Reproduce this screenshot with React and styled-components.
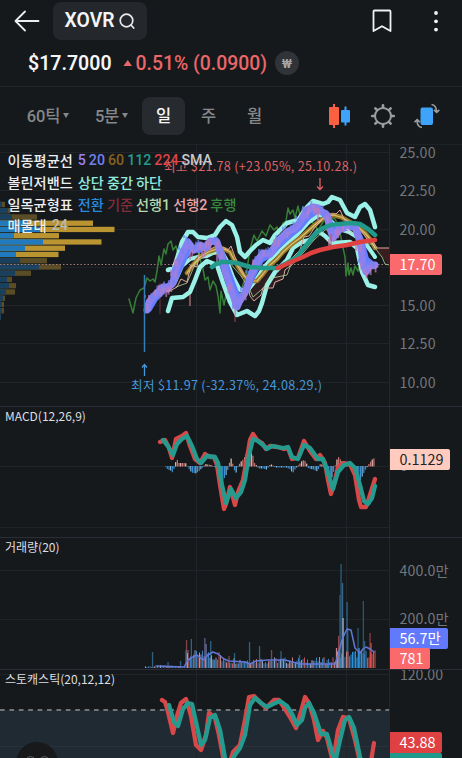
import React from 'react';
import styled, { createGlobalStyle } from 'styled-components';

const GlobalStyle = createGlobalStyle`
  * { box-sizing: border-box; }
  body {
    margin: 0;
    background: #15191c;
    overflow: hidden;
  }
`

const Screen = styled.div`
  width: 462px;
  height: 758px;
  overflow: hidden;
  display: flex;
  flex-direction: column;
  background: #15191c;
  color: #f4f5f6;
  font-family: Roboto, "Noto Sans CJK KR", sans-serif;
`

const Header = styled.header`
  height: 43px;
  flex: none;
  display: flex;
  align-items: center;
  padding: 0 20px 1px 14px;
`

const TickerButton = styled.button`
  width: 94px;
  height: 38px;
  margin: 0 auto 0 13px;
  padding: 0 0 2px;
  display: flex;
  align-items: center;
  justify-content: center;
  gap: 5px;
  border: 0;
  border-radius: 8px;
  background: #24282c;
  color: #f4f5f6;
  font: 600 19.3px Roboto, sans-serif;
`

const HeaderIcon = styled.svg`
  flex: none;
  margin-left: ${props => props.$left || 0}px;
`

const PriceRow = styled.div`
  height: 44px;
  flex: none;
  display: flex;
  align-items: center;
  padding: 0 0 3px 28px;
  border-bottom: 1px solid #22262a;
  font-size: 20px;
  font-weight: 600;
`

const Price = styled.span`
  width: 95px;
  font-size: 19.5px;
`

const Change = styled.span`
  width: 144px;
  display: flex;
  align-items: center;
  gap: 3px;
  color: #e96768;
  font-size: 19.4px;
  font-weight: 500;
  white-space: nowrap;
`

const Currency = styled.span`
  width: 24px;
  height: 24px;
  margin-left: 8px;
  display: flex;
  align-items: center;
  justify-content: center;
  border-radius: 50%;
  background: #303439;
  color: #a5a8aa;
  font: 600 13px Roboto, sans-serif;
`

const Toolbar = styled.nav`
  height: 58px;
  flex: none;
  display: flex;
  align-items: center;
  padding: 0 22px 0 15px;
  border-bottom: 1px solid #1f2327;
`

const Period = styled.button`
  width: ${props => props.$width}px;
  height: 38px;
  padding: 0 0 2px;
  border: 0;
  border-radius: 8px;
  display: flex;
  align-items: center;
  justify-content: center;
  gap: 3px;
  background: ${props => props.$active ? '#272b2f' : 'transparent'};
  color: ${props => props.$active ? '#f7f7f7' : '#85888a'};
  font: 500 16.5px Roboto, "Noto Sans CJK KR", sans-serif;
  letter-spacing: -0.2px;
`

const Caret = styled.span`
  width: 0;
  height: 0;
  border: 3.5px solid transparent;
  border-top: 5.5px solid #85888a;
  border-bottom: 0;
  margin-top: 2px;
`

const Tools = styled.div`
  margin-left: auto;
  display: flex;
  align-items: center;
  gap: 18px;
`

const Panel = styled.section`
  position: relative;
  height: ${props => props.$height}px;
  flex: none;
  display: flex;
  overflow: hidden;
  border-bottom: 1px solid #2a2e37;
`

const Plot = styled.svg`
  width: 390px;
  height: 100%;
  flex: none;
  display: block;
  border-right: 1px solid #24282d;
`

const Axis = styled.svg`
  width: 72px;
  height: 100%;
  display: block;
  fill: #73767a;
  font: 14.2px "Noto Sans CJK KR", sans-serif;
`

const Badge = styled.span`
  position: absolute;
  left: 390px;
  top: ${props => props.$top}px;
  width: ${props => props.$width}px;
  height: 20.5px;
  padding-left: 9.5px;
  border-radius: 0 2px 2px 0;
  background: ${props => props.$bg};
  color: ${props => props.$color || '#fff'};
  font: 14.4px/19.5px "Noto Sans CJK KR", sans-serif;
`

const Legend = styled.div`
  position: absolute;
  left: 7.5px;
  top: 4.5px;
  display: flex;
  flex-direction: column;
`

const LegendRow = styled.div`
  height: 21.7px;
  display: flex;
  align-items: center;
  gap: 3px;
  white-space: nowrap;
  font: 500 14.2px Roboto, "Noto Sans CJK KR", sans-serif;
`

const LegendItem = styled.span`
  color: ${props => props.$color || '#eeeeef'};
  margin-right: ${props => props.$gap || 0}px;
`

const PanelTitle = styled.span`
  position: absolute;
  left: 5px;
  top: 0;
  color: #dddee0;
  font: 12px/17px "Noto Sans CJK KR", sans-serif;
`

const Fab = styled.div`
  position: absolute;
  left: 16px;
  top: 72px;
  width: 42px;
  height: 42px;
  border-radius: 50%;
  background: #17191b;
  display: flex;
  justify-content: center;
  gap: 5px;
  padding-top: 14px;
`

const FabDot = styled.span`
  width: 9px;
  height: 9px;
  border-radius: 50%;
  border: 1px solid #65605c;
`

// [volume on up days, total, highlighted]
const profile = [
  [2, 5, 0], [8, 10, 0], [12, 37, 0], [27, 93, 1], [40, 114.5, 1], [14, 59, 1],
  [43, 101.5, 1], [25, 65, 1], [16, 58.5, 1], [20, 47, 0], [39, 61, 0], [15, 31, 0],
  [7, 12, 0], [9, 16, 0], [6, 15, 0], [3, 5, 0], [2, 4, 0], [2, 4, 0], [1, 1, 0],
]

const bandTop = '168,270 174,268 179,252 182,242 188,232 193,232 198,237 207,238 215,235 220,227 226,221 232,225 237,237 240,252 245,257 250,251 256,245 263,240 270,243 275,235 287,223 298,220 307,207 313,201 323,204 328,202 332,197 340,200 347,213 355,217 360,207 365,204 370,210 375,227'
const bandMid = '168,290 175,282 182,266 190,259 198,257 207,256 215,252 221,250 227,261 233,277 240,290 248,290 256,280 264,267 274,256 286,245 298,234 309,222 319,215 329,219 339,229 349,232 357,237 366,244 375,257'
const bandLow = '168,311 172,298 183,297 190,292 195,280 200,267 207,261 217,265 223,283 230,302 237,315 242,313 247,311 255,316 259,311 262,303 267,285 275,272 287,260 293,248 302,242 310,240 318,231 325,236 332,243 350,242 357,248 362,272 368,285 375,287'
const sma5 = [[147, 310], [149, 302], [153, 297], [159, 291], [163, 287], [168, 287], [173, 283], [175, 271], [179, 261], [183, 252], [188, 242], [194, 250], [200, 245], [206, 248], [210, 241], [217, 242], [221, 255], [225, 271], [230, 286], [237, 307], [241, 298], [245, 293], [250, 277], [257, 261], [263, 253], [270, 254], [278, 241], [287, 232], [295, 228], [300, 222], [307, 210], [313, 207], [318, 208], [322, 212], [327, 215], [330, 229], [333, 238], [340, 229], [347, 227], [355, 227], [360, 242], [363, 263], [366, 272], [370, 266], [375, 265]]
const sma20 = '149,309 155,299 164,290 172,285 178,272 184,259 190,248 199,250 209,243 216,240 223,257 229,274 236,293 241,300 247,289 254,273 261,260 270,255 279,245 289,236 299,228 308,217 318,210 326,213 333,230 343,229 354,224 361,240 366,259 374,266'
const sma60 = '187,273 193,265 200,257 208,252 217,249 224,249 230,252 237,265 244,276 251,281 257,281 263,274 270,265 277,259 283,252 292,244 300,238 309,230 317,223 325,217 333,215 341,217 350,222 358,227 365,233 370,239 375,248'
const sma112 = '212,267 216,264 222,262 229,262 237,263 250,267 262,268 277,268 287,263 297,257 302,250 308,243 315,234 323,228 331,225 340,224 351,223 360,224 368,229 375,235'
const sma224 = '278,268 291,262 303,257 311,253 320,250 333,247 347,245 360,242 375,240'
const lagging = '129,299 131,306 133,313 136,298 140,290 144,288 147,278 150,281 153,279 155,282 157,271 159,256 161,265 164,249 166,254 168,244 171,241 173,250 176,246 178,254 183,246 188,240 192,248 198,252 203,269 205,280 208,277 210,290 213,281 216,286 218,296 220,313 221,291 224,305 227,290 232,300 240,293 246,276 250,249 254,235 257,241 262,231 266,236 270,225 274,230 277,227 279,234 283,223 286,221 288,208 290,214 293,210 295,218 298,206 300,216 303,207 306,213 310,219 318,230 327,216 335,219 339,227 342,243 345,257 346,276 348,263 349,275 351,268 353,275 355,266 358,271 360,265'
const spanA = '168,292 177,287 181,279 187,282 191,265 197,267 200,248 211,249 216,246 223,247 228,250 231,246 235,257 240,267 247,280 250,296 254,301 261,295 263,288 273,288 275,282 283,279 285,270 290,266 293,257 300,250 304,237 309,236 315,227 324,218 329,214 336,214 340,210 344,219 351,225 360,229 367,239 373,242 377,248 389,248'
const spanB = '176,287 187,283 196,262 208,254 222,255 230,263 241,276 250,290 253,297 261,290 272,278 287,275 290,267 304,252 314,240 325,230 342,228 357,235 364,244 373,244 378,252 382,257 385,264 389,265'

const macd = '160,442 165,440 169,448 172,458 176,439 182,436 186,433 190,446 195,459 200,463 205,454 210,457 214,457 217,465 220,485 224,509 226,504 230,487 235,505 238,492 243,480 247,458 250,440 253,434 257,440 262,443 266,449 270,446 278,447 284,449 288,448 292,459 298,458 304,441 310,451 316,459 320,455 325,463 328,480 331,494 335,480 338,467 344,463 350,464 355,475 359,500 361,507 366,507 369,498 375,479'
const signal = '163,440 168,446 173,455 177,444 182,439 187,436 192,446 197,459 201,463 207,456 215,457 218,463 222,485 226,503 231,489 236,498 241,492 245,480 249,455 253,439 258,441 263,445 267,449 272,446 283,448 288,447 292,457 298,459 304,445 310,448 318,459 323,459 328,473 333,489 338,472 344,465 350,463 355,468 360,485 364,501 368,504 372,498 375,486'
const volumeMa = '157,666 184,667 188,660 193,657 197,655 203,660 208,655 213,652 218,654 224,659 229,661 245,662 250,664 256,661 268,660 285,660 300,664 320,664 335,664 338,655 342,640 345,633 347,629 351,630 353,639 355,648 360,653 363,649 366,647 370,649 374,652'
const stochK = '162,700 165,702 168,712 173,733 177,716 181,703 186,699 191,716 196,745 201,750 206,735 209,713 215,718 219,735 224,762 230,762 233,752 240,745 245,720 249,697 254,696 260,702 266,708 274,700 279,700 285,709 290,717 296,728 300,715 305,697 309,703 314,720 318,740 323,731 327,738 333,762 338,730 343,717 349,718 355,740 360,762'
const stochD = '169,705 174,722 178,726 183,709 188,703 192,704 196,722 201,745 205,740 210,718 215,715 220,730 225,758 229,765 235,755 240,748 245,735 250,705 255,698 261,703 267,707 273,704 280,701 287,706 292,714 297,725 302,720 305,708 309,703 314,713 321,734 327,734 331,748 335,763 340,740 345,720 349,717 354,728 360,757 364,766'

// repeatable noise so that the bars keep their heights between renders
const noise = i => {
  const n = Math.sin(i * 12.9898) * 43758.5453
  return n - Math.floor(n)
}

// negative values are drawn above the zero line
const histogram = [
  [165, 0], [167, 3], [170, 4], [172, 6], [174, 1], [176, -8], [178, -3], [182, -3], [185, -3], [188, 2], [191, 6], [195, 7], [198, 5], [201, 2], [205, -2], [210, -1], [215, 1],
  [217, 4], [220, 11], [222, 14], [225, 10], [228, 1], [230, -9], [232, -3], [235, 8], [237, 1], [240, -4], [243, -7], [246, -13], [249, -15], [252, -12], [254, -3], [258, 2], [262, 2], [266, 3],
  [270, -2], [275, 1], [286, 1], [290, 3], [292, 7], [295, 2], [299, -2], [302, -6], [305, -5], [308, 2], [313, 3], [317, 5], [320, -3], [324, 2], [327, 7], [331, 12], [334, 2],
  [336, -6], [338, -9], [341, -5], [345, -3], [350, 1], [354, 6], [357, 11], [360, 14], [362, 9], [365, 3], [369, -3], [372, -7], [374, -8],
]

const histBars = Array.from({ length: 125 }, (_, i) => {
  const x = 165 + i * 1.68
  const next = histogram.findIndex(p => p[0] >= x)
  if (next < 1) return [x, histogram[next < 0 ? histogram.length - 1 : 0][1]]
  const a = histogram[next - 1]
  const b = histogram[next]
  return [x, a[1] + (b[1] - a[1]) * (x - a[0]) / (b[0] - a[0])]
})

const volumeBars = Array.from({ length: 154 }, (_, i) => {
  const x = 145.5 + i * 1.5
  const n = noise(i + 3)
  let h = 4 + n * 7
  if (x < 185) h = n * 3
  else if (x < 222) h = 7 + n * 11
  else if (x > 336) h = 10 + n * 8
  const color = ['#3b7eb5', '#b95659', '#8b9fc0', '#bd8085', '#397dba'][Math.floor(noise(i + 71) * 5)]
  return [x, h, x > 350 && x < 363 ? '#2d91da' : x > 368 ? '#d84e4a' : color]
})

const spikes = [
  [152.5, 16, '#315f80'], [168, 6, '#315f80'], [180.5, 7, '#315f80'], [186.5, 28, '#834444'], [188, 18, '#965055'], [191.3, 29, '#2e6289'], [204.8, 30, '#575f88'], [206, 24, '#746b91'], [210.7, 27, '#2e6289'],
  [229, 12, '#844747'], [234.5, 15, '#315f80'], [249.5, 26, '#2e6289'], [259.5, 22, '#2e6289'], [271.5, 18, '#844747'], [281, 17, '#315f80'], [299.5, 13, '#315f80'], [312, 8, '#315f80'], [327, 8, '#315f80'],
  [336.5, 20, '#c5878c'], [338.7, 32, '#974e52'], [340, 73, '#315f85'], [341, 104, '#295f7d'], [342.5, 85, '#3c6384'], [343, 50, '#a9a7b7'], [347, 66, '#2b6691'], [347.7, 38, '#2b6691'], [358, 40, '#285a71'], [359, 20, '#2d91da'],
  [363.3, 67, '#28566f'], [364.5, 27, '#315f80'], [370, 35, '#83413f'], [371, 25, '#cc4845'],
]

function Line({ points, color, width = 4, opacity = 1 }) {
  return <polyline points={points} fill="none" stroke={color} strokeWidth={width} strokeOpacity={opacity} strokeLinecap="round" strokeLinejoin="round" />
}

function Grid({ rows, top, bottom }) {
  return (
    <g stroke="#202429">
      {rows.map(y => <line key={y} x1="0" x2="389" y1={y + 0.5} y2={y + 0.5} />)}
      {[196.5, 346.5].map(x => <line key={x} x1={x} x2={x} y1={top} y2={bottom} />)}
    </g>
  )
}

function PriceCandles() {
  return (
    <g>
      {sma5.slice(1).map(([x, y], i) => [0, 1, 2].map(k => {
        const n = noise(i * 3 + k)
        const px = x - 4 + k * 2.3
        const py = y - 7 + n * 9
        return <line key={`${i}-${k}`} x1={px} x2={px} y1={py} y2={py + 3 + n * 5} stroke={n > 0.5 ? '#c27cb9' : '#6f84f5'} strokeWidth="1.8" opacity=".75" />
      }))}
    </g>
  )
}

function PriceChart() {
  const priceRows = [152, 190, 229, 267, 305, 343, 382]
  const labels = ['25.00', '22.50', '20.00', null, '15.00', '12.50', '10.00']
  return (
    <Panel $height={262}>
      <Plot viewBox="0 145 389 261" preserveAspectRatio="none">
        <Grid rows={priceRows} top={145} bottom={406} />
        {profile.map(([up, total, strong], i) => (
          <g key={i} opacity={strong ? 1 : 0.42}>
            <rect x="0" y={201.8 + i * 6.25} width={total} height="5.3" fill="#b99431" />
            <rect x="0" y={201.8 + i * 6.25} width={up} height="5.3" fill="#207abd" />
          </g>
        ))}
        <polygon points="250,285 273,270 287,260 283,279 273,288 263,288 254,301" fill="#2c1e21" />
        <polygon points="375,248 389,248 389,265 382,257" fill="#391e21" />
        <line x1="0" x2="389" y1="264.5" y2="264.5" stroke="#a27b7c" strokeDasharray="1.5 2" />
        <Line points={lagging} color="#367f36" width={1.5} />
        <line x1="160" x2="160" y1="283" y2="314" stroke="#742f38" />
        <line x1="190" x2="190" y1="289" y2="306" stroke="#e48d90" />
        <line x1="235" x2="235" y1="312" y2="322" stroke="#a34650" />
        <Line points={bandTop} color="#9bf1e7" width={4.5} />
        <Line points={bandLow} color="#9bf1e7" width={4.5} />
        <Line points={bandMid} color="#9bf1e7" width={4} />
        <Line points={sma60} color="#9b7925" width={4.5} />
        <Line points={sma60} color="#d9c275" width={1.2} />
        <Line points={spanA} color="#e2a79d" width={1} />
        <Line points={spanB} color="#b9d39c" width={0.8} />
        <Line points={sma20} color="#647eff" width={6} />
        <Line points={sma5.map(p => p.join(',')).join(' ')} color="#8b80ef" width={7} />
        <PriceCandles />
        <Line points={sma112} color="#219a8c" width={4.5} />
        <Line points={sma224} color="#df4140" width={4.5} />
        <path d="M331 234v14" stroke="#c64a58" />
        <path d="M346.5 229l3 1.5-1 3" stroke="#d9e3d8" fill="none" />
        <line x1="144.5" x2="144.5" y1="275" y2="352" stroke="#367cb8" strokeWidth="1.5" />
        <path d="M320 178v11M317 186.5l3 3 3-3" stroke="#de6265" strokeWidth="1.3" fill="none" />
        <path d="M144.5 376v-11M142 367.5l2.5-3 2.5 3" stroke="#4598da" strokeWidth="1.3" fill="none" />
        <g fontFamily="Noto Sans CJK KR, sans-serif" fontSize="12.6">
          <text x="164" y="171" fill="#dc6265" textLength="193">최고 $21.78 (+23.05%, 25.10.28.)</text>
          <text x="131" y="390" fill="#4598da" textLength="191">최저 $11.97 (-32.37%, 24.08.29.)</text>
        </g>
      </Plot>
      <Axis viewBox="0 145 72 261">
        {labels.map((label, i) => label && <text key={label} x="9.5" y={priceRows[i] + 5.5} textLength="36">{label}</text>)}
      </Axis>
      <Legend>
        <LegendRow>
          <LegendItem $gap={2}>이동평균선</LegendItem>
          <LegendItem $color="#9b82ed">5</LegendItem>
          <LegendItem $color="#7380ee">20</LegendItem>
          <LegendItem $color="#85631f">60</LegendItem>
          <LegendItem $color="#229c8c">112</LegendItem>
          <LegendItem $color="#df4447">224</LegendItem>
          <LegendItem $color="#c7c8cc">SMA</LegendItem>
        </LegendRow>
        <LegendRow>
          <LegendItem $gap={2}>볼린저밴드</LegendItem>
          <LegendItem $color="#91eadc">상단</LegendItem>
          <LegendItem $color="#91eadc">중간</LegendItem>
          <LegendItem $color="#91eadc">하단</LegendItem>
        </LegendRow>
        <LegendRow>
          <LegendItem $gap={2}>일목균형표</LegendItem>
          <LegendItem $color="#278bdc">전환</LegendItem>
          <LegendItem $color="#842e3b">기준</LegendItem>
          <LegendItem $color="#b4d9ad">선행1</LegendItem>
          <LegendItem $color="#eaa2a6">선행2</LegendItem>
          <LegendItem $color="#398b3e">후행</LegendItem>
        </LegendRow>
        <LegendRow>
          <LegendItem $gap={2}>매물대</LegendItem>
          <LegendItem $color="#bcbbb0">24</LegendItem>
        </LegendRow>
      </Legend>
      <Badge $top={109} $width={51.5} $bg="#fa696c">17.70</Badge>
    </Panel>
  )
}

function MacdChart() {
  return (
    <Panel $height={131}>
      <Plot viewBox="0 407 389 130" preserveAspectRatio="none">
        <Grid rows={[466, 527]} top={407} bottom={537} />
        {histBars.map(([x, h], i) => (
          <rect key={i} x={x} y={h < 0 ? 466 + h : 466} width="1.2" height={Math.abs(h) + 0.5} fill={h < 0 ? (i % 3 ? '#cb7671' : '#efc0b7') : (i % 3 ? '#388ed1' : '#82b9df')} />
        ))}
        <Line points={macd} color="#d84848" width={4.3} />
        <Line points={signal} color="#249b8e" width={4.3} />
      </Plot>
      <Axis viewBox="0 407 72 130"><text x="10" y="471">0</text></Axis>
      <PanelTitle>MACD(12,26,9)</PanelTitle>
      <Badge $top={42} $width={60} $bg="#ffcbbf" $color="#242325">0.1129</Badge>
    </Panel>
  )
}

function VolumeChart() {
  return (
    <Panel $height={132}>
      <Plot viewBox="0 538 389 131" preserveAspectRatio="none">
        <Grid rows={[570, 619]} top={538} bottom={669} />
        {spikes.map(([x, h, color], i) => <rect key={i} x={x - 0.6} y={668 - h} width="1.3" height={h} fill={color} />)}
        {volumeBars.map(([x, h, color], i) => <rect key={i} x={x - 0.5} y={668 - h} width="1" height={h} fill={color} />)}
        <Line points={volumeMa} color="#6278d8" width={1.5} />
      </Plot>
      <Axis viewBox="0 538 72 131">
        <text x="9.5" y="576" textLength="49">400.0만</text>
        <text x="9.5" y="624" textLength="49">200.0만</text>
      </Axis>
      <PanelTitle>거래량(20)</PanelTitle>
      <Badge $top={90} $width={57.5} $bg="#6379fb">56.7만</Badge>
      <Badge $top={110} $width={39.5} $bg="#fa696c">781</Badge>
    </Panel>
  )
}

function StochasticChart() {
  return (
    <Panel $height={89}>
      <Plot viewBox="0 670 389 88" preserveAspectRatio="none">
        <rect x="0" y="710" width="389" height="50" fill="#202a32" />
        <Grid rows={[674]} top={670} bottom={758} />
        <line x1="0" x2="389" y1="746.5" y2="746.5" stroke="#29323a" />
        <line x1="0" x2="389" y1="710" y2="710" stroke="#8c9297" strokeWidth="1.5" strokeDasharray="4.7 4.7" />
        <Line points={stochK} color="#d84848" width={4.3} />
        <Line points="371,762 372,755 374,743" color="#d84848" width={4.3} />
        <Line points={stochD} color="#249b8e" width={4.3} />
      </Plot>
      <Axis viewBox="0 670 72 88"><text x="10" y="679.5" textLength="43">120.00</text></Axis>
      <PanelTitle>스토캐스틱(20,12,12)</PanelTitle>
      <Badge $top={62} $width={51.5} $bg="#df4143">43.88</Badge>
      <Badge $top={82.5} $width={51.5} $bg="#20998c" />
      <Fab><FabDot /><FabDot /></Fab>
    </Panel>
  )
}

export default function App() {
  const [period, setPeriod] = React.useState('일')
  const periods = [['60틱', 66, true], ['5분', 61, true], ['일', 43], ['주', 47], ['월', 45]]

  return (
    <Screen>
      <GlobalStyle />
      <Header>
        <HeaderIcon width="26" height="24" viewBox="0 0 26 24" fill="none" stroke="#edeeef" strokeWidth="1.8" strokeLinecap="round" strokeLinejoin="round">
          <path d="M24.5 12H1.5M11 2.5L1.5 12l9.5 9.5" />
        </HeaderIcon>
        <TickerButton>
          XOVR
          <svg width="16" height="17" viewBox="0 0 16 17" fill="none" stroke="#e9eaec" strokeWidth="1.7" strokeLinecap="round">
            <circle cx="7.5" cy="8.5" r="6.3" />
            <path d="M12 13l2.7 3" />
          </svg>
        </TickerButton>
        <HeaderIcon width="22" height="24" viewBox="0 0 22 24" fill="none" stroke="#f0f1f2" strokeWidth="1.8" strokeLinejoin="round">
          <path d="M3.5 1.5h15q1 0 1 1V22L11 17.2 2.5 22V2.5q0-1 1-1z" />
        </HeaderIcon>
        <HeaderIcon $left={37} width="12" height="22" viewBox="0 0 12 22" fill="#f0f1f2">
          <circle cx="6" cy="3" r="1.9" /><circle cx="6" cy="11.3" r="1.9" /><circle cx="6" cy="19.6" r="1.9" />
        </HeaderIcon>
      </Header>
      <PriceRow>
        <Price>$17.7000</Price>
        <Change>
          <svg width="11" height="8" viewBox="0 0 11 8"><path d="M5.5 .5L10.5 7.5H.5z" fill="#e96768" /></svg>
          0.51% (0.0900)
        </Change>
        <Currency>₩</Currency>
      </PriceRow>
      <Toolbar>
        {periods.map(([label, width, caret]) => (
          <Period key={label} $width={width} $active={label === period} onClick={() => setPeriod(label)}>
            {label}{caret && <Caret />}
          </Period>
        ))}
        <Tools>
          <svg width="23" height="26" viewBox="0 0 23 26">
            <path d="M5 1v24" stroke="#fb6040" strokeWidth="2" /><rect x="0" y="4" width="10" height="18" rx="1" fill="#fb6040" />
            <path d="M16.5 3.5v19" stroke="#3fa3fa" strokeWidth="2" /><rect x="12" y="7" width="9" height="12.5" rx="1" fill="#3fa3fa" />
          </svg>
          <svg width="26" height="26" viewBox="0 0 26 26" fill="none" stroke="#9b9d9e" strokeWidth="2">
            <circle cx="13" cy="13" r="8" />
            {[0, 45, 90, 135, 180, 225, 270, 315].map(a => <path key={a} d="M13 2.2v2.3" strokeWidth="2.6" strokeLinecap="round" transform={`rotate(${a} 13 13)`} />)}
          </svg>
          <svg width="26" height="26" viewBox="0 0 26 26" fill="none" stroke="#9b9d9e" strokeWidth="1.6">
            <rect x="6.5" y="4.5" width="12.5" height="17.5" rx="2" fill="#3fa3fa" stroke="none" />
            <path d="M17.5 1.5q4.8.5 5 7M20 6.8l2.7 2.5 2.6-2.5" />
            <path d="M8 24.5q-4.8-.5-5-7M.5 19.2l2.7-2.5 2.6 2.5" />
          </svg>
        </Tools>
      </Toolbar>
      <PriceChart />
      <MacdChart />
      <VolumeChart />
      <StochasticChart />
    </Screen>
  )
}
